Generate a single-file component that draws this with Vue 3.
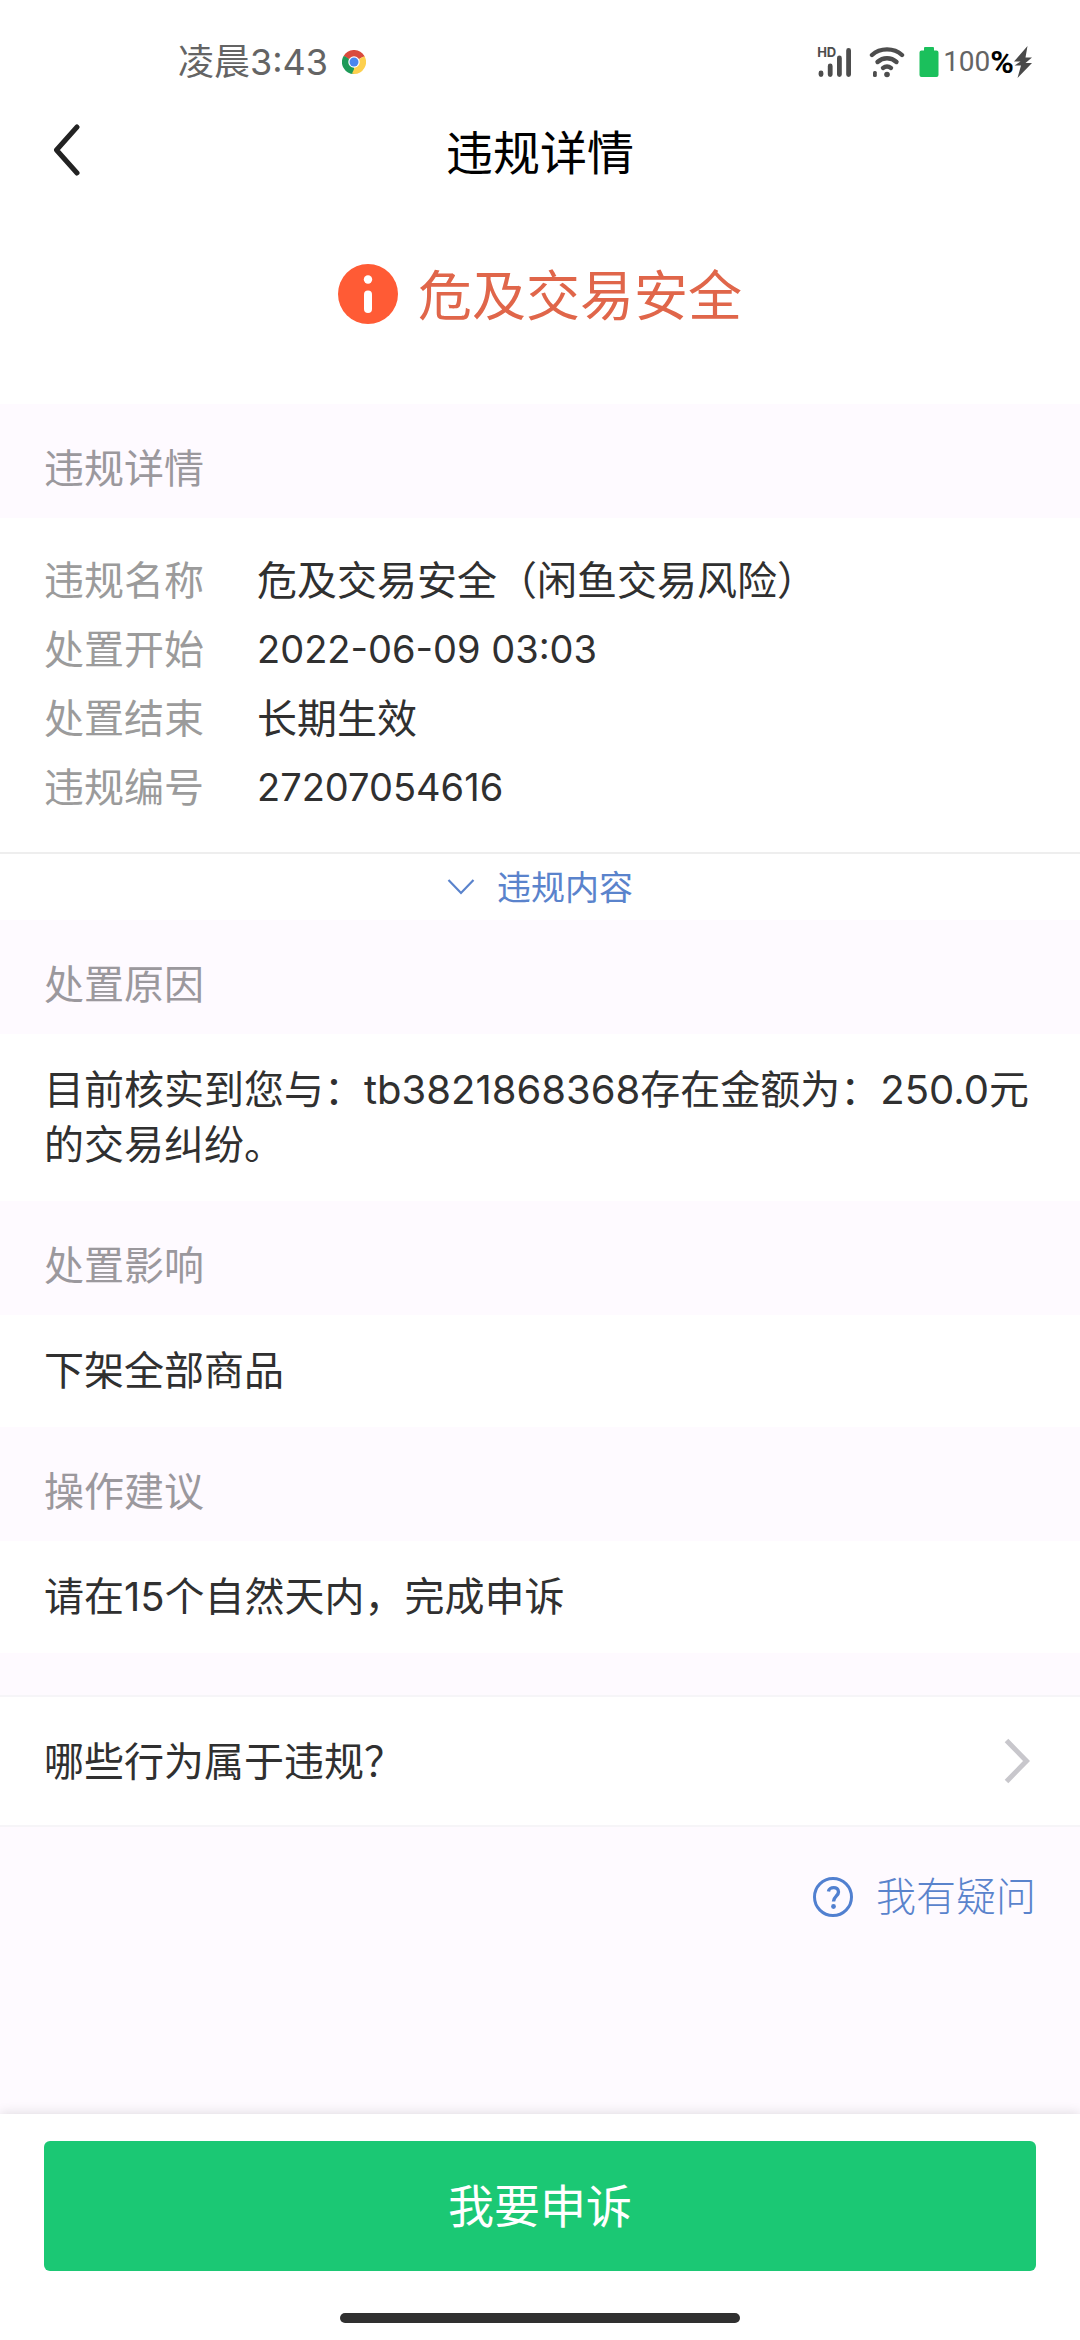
<script setup>
import { ref } from 'vue'

const detail = ref([
  { label: '违规名称', value: '危及交易安全（闲鱼交易风险）' },
  { label: '处置开始', value: '2022-06-09 03:03', numeric: true },
  { label: '处置结束', value: '长期生效' },
  { label: '违规编号', value: '27207054616', numeric: true }
])

const sections = ref([
  { title: '处置原因', content: '目前核实到您与：tb3821868368存在金额为：250.0元的交易纠纷。' },
  { title: '处置影响', content: '下架全部商品' },
  { title: '操作建议', content: '请在15个自然天内，完成申诉' }
])
</script>

<template>
  <div class="page">
    <div class="status-bar">
      <div class="status-left">
        <span class="time">凌晨3:43</span>
        <svg class="chrome" viewBox="0 0 48 48" aria-hidden="true">
          <path fill="#d94a3d" d="M24 24 3.2 12A24 24 0 0 1 44.8 12Z" />
          <path fill="#fdd04e" d="M24 24 44.8 12A24 24 0 0 1 24 48Z" />
          <path fill="#1d9a58" d="M24 24 24 48A24 24 0 0 1 3.2 12Z" />
          <path fill="#d94a3d" d="M24 13H45.3L44.8 12 24 8Z" />
          <path fill="#fdd04e" d="M33.5 29.5 24 48 20 47 28 30Z" />
          <path fill="#1d9a58" d="M14.5 29.5 3.2 12 8 14 16 20Z" />
          <circle cx="24" cy="24" r="11.5" fill="#fff" />
          <circle cx="24" cy="24" r="9" fill="#4a86ee" />
        </svg>
      </div>
      <div class="status-right">
        <div class="signal">
          <span class="hd">HD</span>
          <svg viewBox="0 0 36 32" aria-hidden="true">
            <g stroke="#4d4d4d" stroke-width="4.8" stroke-linecap="round">
              <path d="M4 27v1.5M13.2 20v8.5M22.4 12v16.5M31.6 4.500v24" />
            </g>
          </svg>
        </div>
        <svg class="wifi" viewBox="0 0 36 32" aria-hidden="true">
          <g fill="none" stroke="#4d4d4d" stroke-width="4.4" stroke-linecap="round">
            <path d="M3 9C11 1.500 25 1.500 33 9" />
            <path d="M8.500 16C14 11 22 11 27.500 16" />
            <path d="M14 22C16.500 20 19.500 20 22 22" />
          </g>
          <circle cx="18" cy="28.500" r="2.800" fill="#4d4d4d" />
          <rect x="4" y="25" width="3.800" height="6" rx="1.500" fill="#4d4d4d" />
        </svg>
        <svg class="battery" viewBox="0 0 20 30" aria-hidden="true">
          <path fill="#1bc05c" d="M6 0h8q1 0 1 1v2.500h2.500q2 0 2 2V28q0 2-2 2h-15q-2 0-2-2V5.500q0-2 2-2H5V1q0-1 1-1Z" />
        </svg>
        <span class="percent">100</span>
        <span class="percent-sign">%</span>
        <svg class="bolt" viewBox="0 0 18 32" aria-hidden="true">
          <path fill="#4a4a4a" d="M13.500 0 0 15.500h6.500L.500 19.500H7L3.500 32 18 17h-6.500L18 11.500h-6.500Z" />
        </svg>
      </div>
    </div>

    <header class="nav">
      <button class="back" type="button" aria-label="返回">
        <svg viewBox="0 0 28 52" aria-hidden="true">
          <path d="M25 3 4.500 26 25 49" fill="none" stroke="#222" stroke-width="5" stroke-linecap="round" stroke-linejoin="round" />
        </svg>
      </button>
      <h1>违规详情</h1>
    </header>

    <div class="alert">
      <svg class="alert-icon" viewBox="0 0 60 60" aria-hidden="true">
        <circle cx="30" cy="30" r="30" fill="#ff5b35" />
        <circle cx="30" cy="15.500" r="4.200" fill="#fff" />
        <rect x="26" y="26.500" width="8" height="22.500" rx="4" fill="#fff" />
      </svg>
      <span>危及交易安全</span>
    </div>

    <h2 class="section-title">违规详情</h2>
    <dl class="detail">
      <template v-for="item in detail" :key="item.label">
        <dt>{{ item.label }}</dt>
        <dd :class="{ numeric: item.numeric }">{{ item.value }}</dd>
      </template>
    </dl>
    <button class="toggle" type="button">
      <svg viewBox="0 0 28 18" aria-hidden="true">
        <path d="M1.500 2 14 15 26.500 2" fill="none" stroke="#5a83cc" stroke-width="2.200" />
      </svg>
      <span>违规内容</span>
    </button>

    <section v-for="section in sections" :key="section.title">
      <h2 class="section-title">{{ section.title }}</h2>
      <p class="section-content">{{ section.content }}</p>
    </section>

    <a class="link-row" href="#">
      <span>哪些行为属于违规？</span>
      <svg viewBox="0 0 26 46" aria-hidden="true">
        <path d="M2.500 2.500 22.500 23 2.500 43.500" fill="none" stroke="#c8c7cc" stroke-width="5" />
      </svg>
    </a>

    <a class="help" href="#">
      <svg viewBox="0 0 40 40" aria-hidden="true">
        <circle cx="20" cy="20" r="18.500" fill="none" stroke="#5180d0" stroke-width="3" />
        <path d="M15.500 14.500C16 9.500 25.500 9 25.500 15 25.500 19 20.500 19.500 20.500 24.500" fill="none" stroke="#5180d0" stroke-width="3.400" />
        <circle cx="20.500" cy="29.500" r="2.400" fill="#5180d0" />
      </svg>
      <span>我有疑问</span>
    </a>

    <footer class="footer">
      <button class="appeal" type="button">我要申诉</button>
      <div class="home-bar"></div>
    </footer>
  </div>
</template>

<style>
body {
  margin: 0;
  background: #fefaff;
}
</style>

<style scoped>
.page {
  display: flex;
  flex-direction: column;
  min-height: 100vh;
  background: #fefaff;
  color: #303030;
  font-family: Inter, "Noto Sans CJK SC", sans-serif;
  font-size: 40px;
  line-height: 55px;
}

h1,
h2,
p,
dl,
dd {
  margin: 0;
  font-weight: 400;
}

button {
  border: 0;
  padding: 0;
  background: none;
  font: inherit;
  cursor: pointer;
}

a {
  color: inherit;
  text-decoration: none;
}

svg {
  display: block;
  flex: none;
}

.status-bar {
  display: flex;
  justify-content: space-between;
  align-items: center;
  padding: 40px 48px 0 178px;
  background: #fff;
  line-height: 44px;
}

.status-left,
.status-right {
  display: flex;
  align-items: center;
}

.status-left {
  gap: 14px;
}

.time {
  color: #646464;
  font-size: 36px;
}

.chrome {
  width: 24px;
  height: 24px;
}

.signal {
  position: relative;
  margin-right: 16px;
}

.signal svg {
  width: 36px;
  height: 32px;
}

.hd {
  position: absolute;
  left: 0;
  top: 0;
  color: #4d4d4d;
  font-size: 13px;
  font-weight: 700;
  line-height: 12px;
}

.wifi {
  width: 36px;
  height: 32px;
  margin-right: 14px;
}

.battery {
  width: 20px;
  height: 30px;
  margin-right: 4px;
}

.percent {
  color: #646464;
  font-family: Roboto, sans-serif;
  font-size: 28px;
}

.percent-sign {
  color: #000;
  font-family: Roboto, sans-serif;
  font-size: 32px;
  font-weight: 700;
}

.bolt {
  width: 18px;
  height: 32px;
}

.nav {
  display: grid;
  grid-template-columns: 1fr auto 1fr;
  align-items: center;
  height: 132px;
  padding: 0 44px;
  background: #fff;
}

.back {
  justify-self: start;
  padding: 8px;
}

.back svg {
  width: 28px;
  height: 52px;
}

.nav h1 {
  padding-top: 4px;
  color: #000;
  font-size: 47px;
}

.alert {
  display: flex;
  justify-content: center;
  align-items: flex-end;
  gap: 20px;
  padding: 48px 44px 80px;
  background: #fff;
  color: #e0664a;
  font-size: 54px;
  line-height: 54px;
}

.alert-icon {
  width: 60px;
  height: 60px;
}

.section-title {
  padding: 37px 44px 22px;
  color: #9b989d;
  font-size: 40px;
}

.detail {
  display: grid;
  grid-template-columns: auto 1fr;
  column-gap: 53px;
  padding: 28px 44px 30px;
  border-bottom: 2px solid #eeeeee;
  background: #fff;
  line-height: 69px;
}

.detail dt {
  color: #9b9b9b;
}

.detail .numeric {
  font-size: 38px;
}

.toggle {
  display: flex;
  justify-content: center;
  align-items: center;
  gap: 22px;
  height: 66px;
  background: #fff;
  color: #5a83cc;
  font-size: 34px;
}

.toggle svg {
  width: 28px;
  height: 18px;
}

.section-content {
  padding: 28px 44px 29px;
  background: #fff;
}

.link-row {
  display: flex;
  justify-content: space-between;
  align-items: center;
  height: 128px;
  margin-top: 42px;
  padding: 0 50px 0 44px;
  border-top: 2px solid #f6f5f8;
  border-bottom: 2px solid #f6f5f8;
  background: #fff;
}

.link-row svg {
  width: 26px;
  height: 46px;
}

.help {
  display: flex;
  align-items: center;
  align-self: flex-end;
  gap: 23px;
  margin: 42px 44px 0;
  color: #5a83cc;
  font-weight: 300;
}

.help svg {
  width: 40px;
  height: 40px;
}

.footer {
  display: flex;
  flex-direction: column;
  margin-top: auto;
  padding: 27px 44px 17px;
  background: #fff;
  box-shadow: 0 0 12px rgba(0, 0, 0, 0.14);
}

.appeal {
  height: 130px;
  border-radius: 6px;
  background: #1bc874;
  color: #fff;
  font-size: 46px;
}

.home-bar {
  align-self: center;
  width: 400px;
  height: 10px;
  margin-top: 42px;
  border-radius: 5px;
  background: #303030;
}
</style>
